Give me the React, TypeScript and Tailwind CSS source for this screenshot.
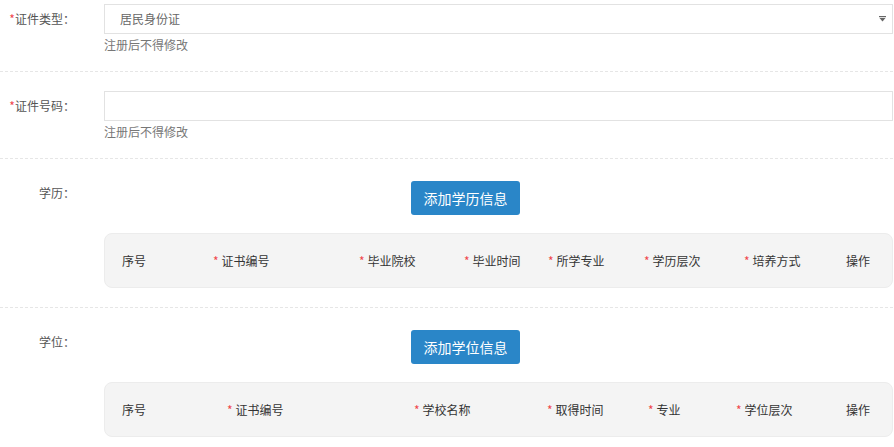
import React from "react";

const font = { fontFamily: '"Noto Sans CJK SC", "Noto Sans", sans-serif' };

const Star = () => <span className="text-[#f0464b]">*</span>;

const FormRow = ({
  label,
  required,
  children,
  className,
  labelClass,
}: {
  label: string;
  required?: boolean;
  children: React.ReactNode;
  className?: string;
  labelClass?: string;
}) => (
  <div className={"flex border-b border-dashed border-[#e6e6e6] " + (className || "")}>
    <div className={"w-[75px] shrink-0 text-right text-[12px] text-[#555] " + (labelClass || "leading-[30px]")}>
      {required && <Star />}
      {label}：
    </div>
    <div className="ml-[29px] flex-1">{children}</div>
  </div>
);

const TableHead = ({ cols, widths }: { cols: [string, boolean][]; widths: string }) => (
  <div className="mt-[18px] h-[55px] rounded-[8px] border border-[#ececec] bg-[#f4f4f4] pl-[17px]">
    <div className={"grid h-full items-center text-[12px] text-[#333] " + widths}>
      {cols.map(([c, req]) => (
        <div key={c} className="whitespace-nowrap">
          {req && <span className="mr-[3px] text-[#f0464b]">*</span>}
          {c}
        </div>
      ))}
    </div>
  </div>
);

const App = () => {
  return (
    <div className="h-[447px] w-[894px] overflow-hidden bg-white pr-[1px]" style={font}>
      <FormRow label="证件类型" required className="pt-[4px] pb-[18px]">
        <div className="flex h-[30px] items-center justify-between border border-[#e2e2e2] bg-white pl-[15px] pr-[6px] text-[12px] text-[#666]">
          <span>居民身份证</span>
          <svg width="7" height="6" viewBox="0 0 7 6">
            <rect x="0" y="0" width="7" height="1.2" fill="#666" />
            <path d="M0.5 2 L6.5 2 L3.5 5.5 Z" fill="#666" />
          </svg>
        </div>
        <div className="mt-[3px] text-[12px] leading-[16px] text-[#777]">注册后不得修改</div>
      </FormRow>

      <FormRow label="证件号码" required className="pt-[19px] pb-[18px]">
        <div className="h-[30px] border border-[#e2e2e2] bg-white"></div>
        <div className="mt-[3px] text-[12px] leading-[16px] text-[#777]">注册后不得修改</div>
      </FormRow>

      <FormRow label="学历" className="pt-[22px] pb-[19px]" labelClass="leading-[24px]">
        <div className="flex justify-center pr-[66px]">
          <button className="h-[34px] w-[109px] rounded-[3px] bg-[#2a86c8] text-[14px] text-white">
            添加学历信息
          </button>
        </div>
        <TableHead
          widths="grid-cols-[91px_146px_105px_84px_96px_100px_102px_1fr]"
          cols={[
            ["序号", false],
            ["证书编号", true],
            ["毕业院校", true],
            ["毕业时间", true],
            ["所学专业", true],
            ["学历层次", true],
            ["培养方式", true],
            ["操作", false],
          ]}
        />
      </FormRow>

      <FormRow label="学位" className="pt-[22px] pb-[18px] border-b-0" labelClass="leading-[24px]">
        <div className="flex justify-center pr-[66px]">
          <button className="h-[34px] w-[109px] rounded-[3px] bg-[#2a86c8] text-[14px] text-white">
            添加学位信息
          </button>
        </div>
        <TableHead
          widths="grid-cols-[105px_187px_133px_101px_88px_110px_1fr]"
          cols={[
            ["序号", false],
            ["证书编号", true],
            ["学校名称", true],
            ["取得时间", true],
            ["专业", true],
            ["学位层次", true],
            ["操作", false],
          ]}
        />
      </FormRow>
    </div>
  );
};

export default App;
